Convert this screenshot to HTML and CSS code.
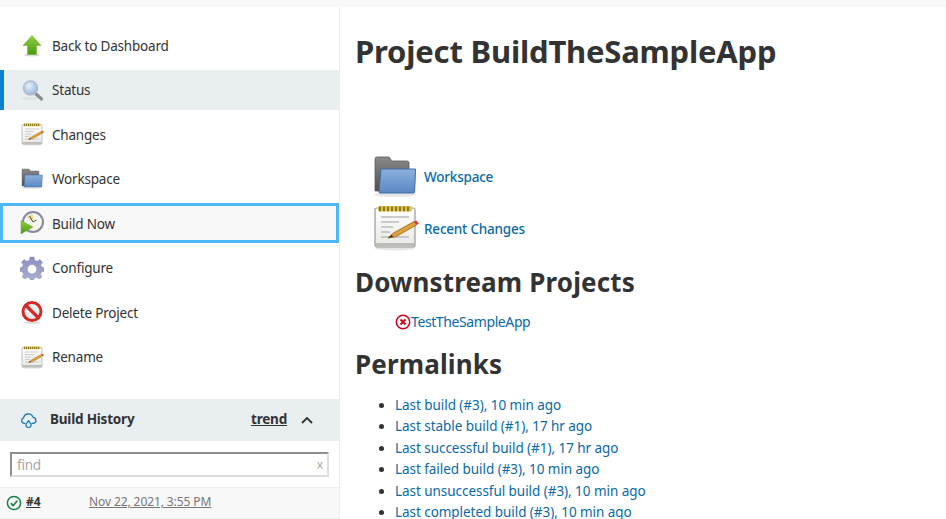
FILE: index.html
```html
<!DOCTYPE html>
<html lang="en">
<head>
<meta charset="utf-8">
<title>Project BuildTheSampleApp</title>
<link rel="stylesheet" href="styles.css">
</head>
<body>
<svg class="defs" width="0" height="0" aria-hidden="true">
  <defs>
    <linearGradient id="gGreen" x1="0" y1="0" x2="0" y2="1"><stop offset="0" stop-color="#8fd04a"/><stop offset="1" stop-color="#4b9a0a"/></linearGradient>
    <linearGradient id="gFolder" x1="0" y1="0" x2="0" y2="1"><stop offset="0" stop-color="#8cb0de"/><stop offset="1" stop-color="#5b88c4"/></linearGradient>
    <linearGradient id="gBack" x1="0" y1="0" x2="0" y2="1"><stop offset="0" stop-color="#8a8a8a"/><stop offset="1" stop-color="#4f4f4f"/></linearGradient>
    <linearGradient id="gPaper" x1="0" y1="0" x2="0" y2="1"><stop offset="0" stop-color="#ffffff"/><stop offset="1" stop-color="#e8e8e4"/></linearGradient>
    <radialGradient id="gLens" cx=".4" cy=".35" r=".7"><stop offset="0" stop-color="#e8f1fb"/><stop offset="1" stop-color="#8fb2dd"/></radialGradient>
    <linearGradient id="gGear" x1="0" y1="0" x2="0" y2="1"><stop offset="0" stop-color="#8b90c0"/><stop offset="1" stop-color="#a9acd0"/></linearGradient>
    <symbol id="i-up" viewBox="0 0 24 24">
      <ellipse cx="12" cy="22" rx="8" ry="1.4" fill="#d8d8d8"/>
      <path d="M12 2.500 21 12.500H16.500V21.500H7.500V12.500H3Z" fill="url(#gGreen)" stroke="#6aa82c" stroke-width=".5"/>
    </symbol>
    <symbol id="i-search" viewBox="0 0 24 24">
      <ellipse cx="10" cy="20.500" rx="8.500" ry="1.600" fill="#e0e2e4"/>
      <path d="M15.500 15.500 21.500 21" stroke="#8c8c8c" stroke-width="3.200" stroke-linecap="round"/>
      <circle cx="10.500" cy="10" r="7" fill="url(#gLens)" stroke="#b4bcc6" stroke-width="1.600"/>
    </symbol>
    <symbol id="i-notes" viewBox="0 0 24 24">
      <ellipse cx="12" cy="22.600" rx="10" ry="1.100" fill="#e6e6e6"/>
      <rect x="2" y="2.500" width="20" height="19.500" rx="1" fill="url(#gPaper)" stroke="#9a9a9a" stroke-width=".6"/>
      <rect x="2.300" y="20" width="19.400" height="1.800" fill="#bcbcb8"/>
      <rect x="3.500" y="1.500" width="17" height="2.800" rx=".8" fill="#dcc257"/>
      <path d="M4 2.900H20" stroke="#8f7a1e" stroke-width="2.400" stroke-dasharray="1 1"/>
      <path d="M5 7H19M5 9.500H14M5 12H11M5 14.500H9.500M5 17H19" stroke="#bcbcbc" stroke-width=".7"/>
      <path d="M8.500 17.500 11.200 15 21.500 9.300 22.800 11 12.500 16.800Z" fill="#e0a038" stroke="#8a5a18" stroke-width=".35"/>
      <path d="M8.500 17.500 10.200 15.900 11.200 17Z" fill="#4a3a1c"/>
      <path d="M21.500 9.300 22.700 8.700 24 10.300 22.800 11Z" fill="#d9423a"/>
    </symbol>
    <symbol id="i-folder" viewBox="0 0 24 24">
      <ellipse cx="12" cy="20.800" rx="10.500" ry="1.100" fill="#e6e6e6"/>
      <path d="M2 3Q2 2 3 2H9L10.500 4H18Q19 4 19 5V19H2Z" fill="url(#gBack)" stroke="#5a5a5a" stroke-width=".4"/>
      <path d="M5 8H22.300L21.800 19.500Q21.800 20 21.300 20H4.500Q4 20 4 19.500Z" fill="url(#gFolder)" stroke="#3f6ea8" stroke-width=".5"/>
    </symbol>
    <symbol id="i-build" viewBox="0 0 24 24">
      <circle cx="13" cy="11" r="10" fill="#f4f3ee" stroke="#8a86a0" stroke-width="2"/>
      <path d="M13 11V3.500A7.500 7.500 0 0 0 7 6.500Z" fill="#ecd88a"/>
      <path d="M13 11 9.500 5M13 11 16.500 9" stroke="#444" stroke-width=".9"/>
      <path d="M1 9.500 13 16 1 23Z" fill="url(#gGreen)" stroke="#5c9c18" stroke-width=".4"/>
    </symbol>
    <symbol id="i-gear" viewBox="0 0 24 24">
      <path fill-rule="evenodd" fill="url(#gGear)" stroke="#8083b0" stroke-width=".4" d="M10 1H14L14.700 4.300 17.200 5.300 20 3.500 22.600 6.300 20.700 9 21.700 11.100 24 11.800V15.200L21.500 16 20.500 18.200 21.800 21 19 23 16.500 21.300 14 22.300 13.500 24H10.500L10 22.300 7.500 21.300 5 23 2.200 21 3.500 18.200 2.500 16 0 15.200V11.800L2.300 11.100 3.300 9 1.400 6.300 4 3.500 6.800 5.300 9.300 4.300ZM12 8.500A4.700 4.700 0 1 0 12 17.900 4.700 4.700 0 1 0 12 8.500Z"/>
    </symbol>
    <symbol id="i-stop" viewBox="0 0 24 24">
      <ellipse cx="12" cy="22.800" rx="9" ry="1.100" fill="#dcdcdc"/>
      <circle cx="12" cy="11.500" r="9" fill="#f5f0f0" stroke="#d42a2a" stroke-width="3"/>
      <path d="M5.500 5 18.500 18" stroke="#d42a2a" stroke-width="3.200"/>
    </symbol>
    <symbol id="i-cloud" viewBox="0 0 24 24">
      <path d="M7 17.500H5.500A4 4 0 0 1 5 9.800 7 7 0 0 1 18.500 9 4.300 4.300 0 0 1 19 17.500H17" fill="none" stroke="#1b78b4" stroke-width="1.800" stroke-linecap="round" stroke-linejoin="round"/>
      <path d="M12 13.500 15 18A3.500 3.500 0 1 1 9 18Z" fill="none" stroke="#1b78b4" stroke-width="1.800" stroke-linejoin="round"/>
    </symbol>
  </defs>
</svg>
<div class="topbar"></div>
<div class="page">
  <aside class="sidebar">
    <nav class="tasks">
      <a class="task"><svg class="task-icon"><use href="#i-up"/></svg><span>Back to Dashboard</span></a>
      <a class="task task-active"><svg class="task-icon"><use href="#i-search"/></svg><span>Status</span></a>
      <a class="task"><svg class="task-icon"><use href="#i-notes"/></svg><span>Changes</span></a>
      <a class="task"><svg class="task-icon"><use href="#i-folder"/></svg><span>Workspace</span></a>
      <a class="task task-focus"><svg class="task-icon"><use href="#i-build"/></svg><span>Build Now</span></a>
      <a class="task"><svg class="task-icon"><use href="#i-gear"/></svg><span>Configure</span></a>
      <a class="task"><svg class="task-icon"><use href="#i-stop"/></svg><span>Delete Project</span></a>
      <a class="task"><svg class="task-icon"><use href="#i-notes"/></svg><span>Rename</span></a>
    </nav>
    <section class="history">
      <header class="history-head">
        <svg class="cloud"><use href="#i-cloud"/></svg>
        <span class="history-title">Build History</span>
        <a class="trend">trend</a>
        <svg class="chevron" viewBox="0 0 12 8"><path d="M1 7 6 2 11 7" fill="none" stroke="#333" stroke-width="1.800"/></svg>
      </header>
      <div class="search">
        <div class="search-box"><span class="placeholder">find</span><span class="clear">x</span></div>
      </div>
      <div class="build-row">
        <svg class="check" viewBox="0 0 16 16"><circle cx="8" cy="8" r="6.600" fill="none" stroke="#138347" stroke-width="1.500"/><path d="M4.800 8.200 7.200 10.500 11.300 5.800" fill="none" stroke="#138347" stroke-width="1.600"/></svg>
        <a class="build-num">#4</a>
        <a class="build-date">Nov 22, 2021, 3:55 PM</a>
      </div>
    </section>
  </aside>
  <main class="main">
    <h1>Project BuildTheSampleApp</h1>
    <div class="main-links">
      <div class="main-link"><svg class="big-icon"><use href="#i-folder"/></svg><a>Workspace</a></div>
      <div class="main-link"><svg class="big-icon big-notes"><use href="#i-notes"/></svg><a>Recent Changes</a></div>
    </div>
    <h2 class="h-down">Downstream Projects</h2>
    <div class="downstream">
      <svg class="err" viewBox="0 0 16 16"><circle cx="8" cy="8" r="6.700" fill="#fff" stroke="#d0021b" stroke-width="1.500"/><path d="M5.500 5.500 10.500 10.500M10.500 5.500 5.500 10.500" stroke="#d0021b" stroke-width="2"/></svg><a>TestTheSampleApp</a>
    </div>
    <h2 class="h-perma">Permalinks</h2>
    <ul class="permalinks">
      <li><a>Last build (#3), 10 min ago</a></li>
      <li><a>Last stable build (#1), 17 hr ago</a></li>
      <li><a>Last successful build (#1), 17 hr ago</a></li>
      <li><a>Last failed build (#3), 10 min ago</a></li>
      <li><a>Last unsuccessful build (#3), 10 min ago</a></li>
      <li><a>Last completed build (#3), 10 min ago</a></li>
    </ul>
  </main>
</div>
</body>
</html>
```
FILE: styles.css
```css
* { box-sizing: border-box; }
html, body { margin: 0; height: 519px; overflow: hidden; background: #fff; }
body { font-family: "Noto Sans", "Open Sans", sans-serif; font-size: 13.5px; letter-spacing: -0.2px; color: #333; }
.defs { position: absolute; }
.topbar { height: 7px; background: #f8f8f8; }
.page { display: flex; height: 512px; }

.sidebar { width: 340px; flex: none; border-right: 1px solid #eee; padding-top: 18px; display: flex; flex-direction: column; }
.tasks { display: flex; flex-direction: column; gap: 4.5px; }
.task { display: flex; align-items: center; height: 40px; padding-left: 20px; gap: 8px; color: #333; }
.task span { margin-top: 1px; }
.task-icon { width: 24px; height: 24px; flex: none; }
.task-active { background: #e9eef0; box-shadow: inset 4px 0 0 #0a83d1; }
.task-focus { background: #f8f8f8; border: 3px solid #4db8f5; padding-left: 17px; }

.history { margin-top: 22px; }
.history-head { display: flex; align-items: center; height: 42px; background: #e9eef0; padding: 0 0 1px 20px; }
.cloud { width: 17px; height: 17px; flex: none; }
.history-title { font-weight: 700; margin-left: 13px; }
.trend { margin-left: auto; font-weight: 700; text-decoration: underline; }
.chevron { width: 12px; height: 8px; margin: 1px 26px 0 14px; flex: none; }
.search { height: 47px; padding: 11px 10px 0; border-bottom: 1px solid #eee; }
.search-box { display: flex; justify-content: space-between; align-items: center; height: 25px; padding: 1px 4px 0 5px; border: 2px solid #dedede; border-top-color: #8f8f8f; border-left-color: #8f8f8f; }
.placeholder { color: #a8a8a8; }
.clear { color: #aaa; font-size: 12px; }
.build-row { display: flex; align-items: center; height: 31px; padding-bottom: 2px; background: #f8f8f8; border-bottom: 1px solid #eee; padding-left: 6px; font-size: 12px; letter-spacing: -0.1px; }
.check { width: 16px; height: 16px; flex: none; margin-top: 2px; }
.build-num { margin-left: 4px; font-weight: 700; text-decoration: underline; width: 63px; }
.build-date { color: #777; text-decoration: underline; }

.main { flex: 1; padding-left: 15px; min-width: 0; }
h1, h2 { margin: 0; font-weight: 700; color: #333; }
h1 { font-size: 31px; line-height: 44px; margin-top: 22px; letter-spacing: -0.2px; }
h2 { font-size: 26px; line-height: 36px; letter-spacing: 0.15px; }
a { color: inherit; }
.main-links { margin-top: 80px; padding-left: 16px; display: flex; flex-direction: column; gap: 4px; }
.main-link { display: flex; align-items: center; gap: 5px; height: 48px; }
.main-link a, .downstream a, .permalinks a { color: #0b6aa8; }
.main-link a { font-weight: 500; }
.big-icon { width: 48px; height: 48px; flex: none; }
.big-notes { margin-top: -4px; }
.h-down { margin-top: 11px; }
.downstream { display: flex; align-items: center; padding-left: 40px; margin-top: 9px; height: 24px; font-size: 14px; letter-spacing: -0.4px; }
.err { width: 16px; height: 16px; flex: none; margin-top: 2px; }
.h-perma { margin-top: 13px; }
.permalinks { margin: 13px 0 0; padding: 0 0 0 40px; line-height: 21.4px; letter-spacing: -0.05px; }
```
